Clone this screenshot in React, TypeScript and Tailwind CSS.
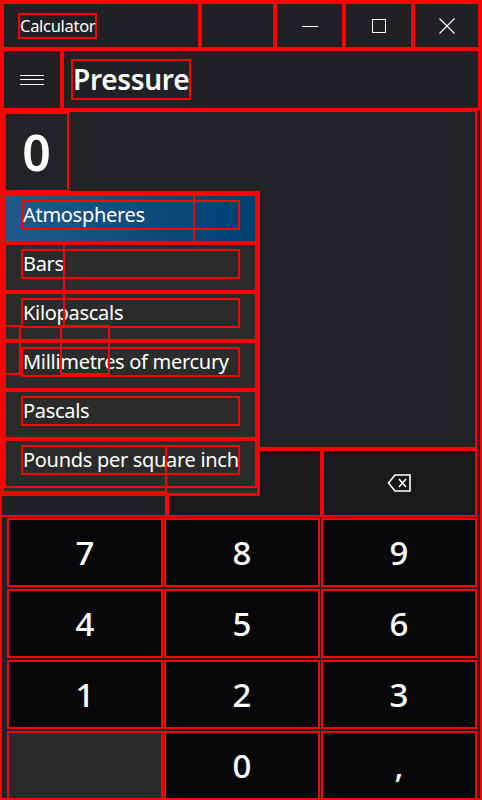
// Pressure converter window, dark theme, with the unit dropdown open

const units = [
  "Atmospheres",
  "Bars",
  "Kilopascals",
  "Millimetres of mercury",
  "Pascals",
  "Pounds per square inch",
];

const keyRows = [
  ["7", "8", "9"],
  ["4", "5", "6"],
  ["1", "2", "3"],
  ["", "0", ","],
];

const box = "border-2 border-[#ff0000]";

function Backspace() {
  return (
    <svg width="26" height="20" viewBox="0 0 26 20" fill="none" stroke="white" strokeWidth="1.6">
      <path d="M8 2 H23 V18 H8 L1.5 10 Z" />
      <path d="M12 6 L19 14 M19 6 L12 14" />
    </svg>
  );
}

export default function App() {
  return (
    <div
      className={`relative w-[482px] h-[800px] flex flex-col bg-[#202124] text-white overflow-hidden ${box}`}
      style={{ fontFamily: '"Noto Sans", "Open Sans", sans-serif' }}
    >
      {/* Title bar */}
      <div className="flex h-[47px] shrink-0">
        <div className={`w-[198px] flex items-center pl-[14px] ${box}`}>
          <span className={`text-[16.5px] leading-[22px] tracking-[-0.3px] ${box}`}>Calculator</span>
        </div>
        <div className={`w-[75px] ${box}`} />
        <div className={`w-[69px] flex items-center justify-center ${box}`}>
          <svg width="16" height="16" viewBox="0 0 16 16" stroke="white" strokeWidth="1">
            <path d="M0 8.5 H16" />
          </svg>
        </div>
        <div className={`w-[69px] flex items-center justify-center ${box}`}>
          <svg width="16" height="16" viewBox="0 0 16 16" fill="none" stroke="white" strokeWidth="1">
            <rect x="1.5" y="1.5" width="13" height="13" />
          </svg>
        </div>
        <div className={`flex-1 flex items-center justify-center ${box}`}>
          <svg width="16" height="16" viewBox="0 0 16 16" stroke="white" strokeWidth="1.1">
            <path d="M0.5 0.5 L15.5 15.5 M15.5 0.5 L0.5 15.5" />
          </svg>
        </div>
      </div>

      {/* Navigation */}
      <div className="flex h-[61px] shrink-0">
        <div className={`w-[60px] flex flex-col items-center justify-center gap-[3.5px] ${box}`}>
          <span className="block w-[24px] h-px bg-white" />
          <span className="block w-[24px] h-px bg-white" />
          <span className="block w-[24px] h-px bg-white" />
        </div>
        <div className={`flex-1 flex items-center pl-[7px] ${box}`}>
          <span className={`text-[28px] leading-[37px] font-semibold tracking-[-0.3px] ${box}`}>Pressure</span>
        </div>
      </div>

      {/* Display */}
      <div className={`h-[339px] w-[475px] shrink-0 bg-[#222326] ${box}`}>
        <div className={`w-[65px] h-[80px] flex items-center justify-center ${box}`}>
          <span className="text-[50px] font-semibold leading-none">0</span>
        </div>
      </div>

      {/* Function row */}
      <div className="flex h-[68px] w-[475px] shrink-0">
        <div className="w-[165px]" />
        <div className={`w-[155px] flex items-center justify-center bg-[#19191b] ${box}`}>
          <span className="text-[20px] pt-[1px]">CE</span>
        </div>
        <div className={`flex-1 flex items-center justify-center bg-[#19191b] ${box}`}>
          <Backspace />
        </div>
      </div>

      {/* Keypad */}
      <div className="flex flex-col gap-[2px] pl-[5px] pt-[1px] w-[475px]">
        {keyRows.map((row, r) => (
          <div key={r} className="flex gap-[1px] h-[69px]">
            {row.map((k, c) => (
              <div
                key={c}
                className={`flex-1 flex items-center justify-center text-[33px] font-medium ${k ? "bg-[#070709]" : "bg-[#29292c]"} ${box}`}
              >
                {k}
              </div>
            ))}
          </div>
        ))}
      </div>

      {/* Unit dropdown */}
      <div className="absolute left-[-1px] top-[189px] w-[259px] h-[305px] border-[3px] border-[#ff0000] bg-[#2b2b2b] flex flex-col">
        {units.map((u, i) => (
          <div
            key={u}
            className={`h-[49px] flex items-start pt-[4px] pl-[15px] border-2 border-[#ff0000] ${
              i === 0 ? "bg-gradient-to-r from-[#1f5a88] to-[#003f72]" : "bg-[#2b2b2b]"
            }`}
          >
            <span className={`w-[219px] h-[30px] flex items-center text-[20px] leading-none tracking-[-0.3px] whitespace-nowrap ${box}`}>
              {u}
            </span>
          </div>
        ))}
      </div>

      {/* Outlines of elements lying under the menu */}
      <div className="absolute left-[191px] top-[190px] w-[2px] h-[50px] bg-[#ff0000]" />
      <div className="absolute left-[61px] top-[239px] w-[2px] h-[86px] bg-[#ff0000]" />
      <div className={`absolute left-[-2px] top-[323px] w-[21px] h-[50px] ${box}`} />
      <div className={`absolute left-[58px] top-[323px] w-[50px] h-[50px] ${box}`} />
      <div className="absolute left-[163px] top-[445px] w-[2px] h-[70px] bg-[#ff0000]" />
      <div className={`absolute left-[-2px] top-[489px] w-[167px] h-[26px] ${box}`} />
    </div>
  );
}
